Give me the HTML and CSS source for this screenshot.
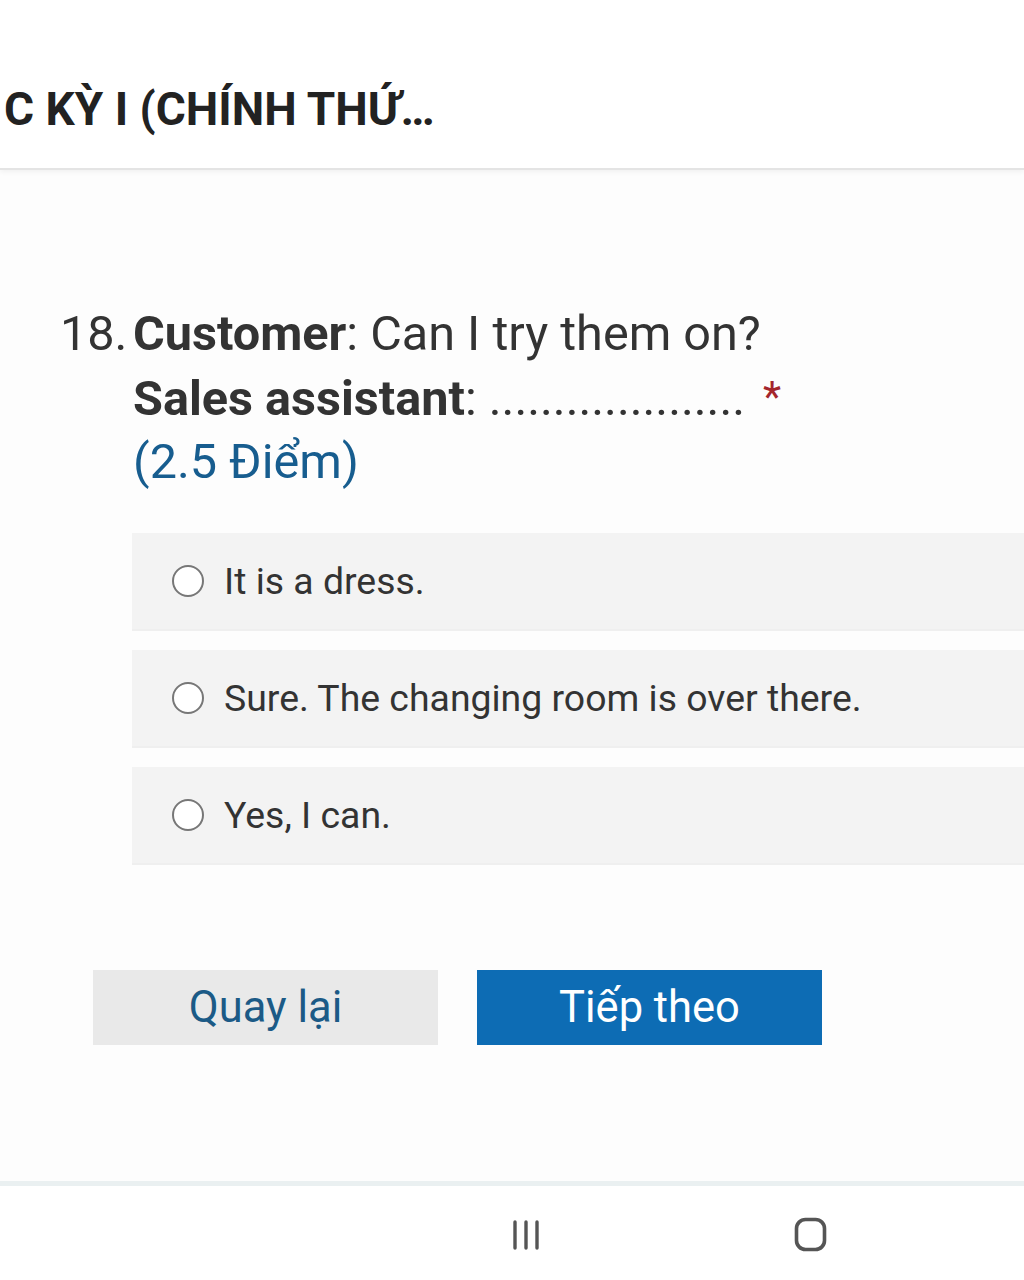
FILE: index.html
```html
<!DOCTYPE html>
<html lang="vi">
<head>
<meta charset="utf-8">
<title>Form</title>
<link rel="stylesheet" href="styles.css">
</head>
<body>
<div class="page">
  <header class="topbar">
    <h1 class="title">C KỲ I (CHÍNH THỨ…</h1>
  </header>
  <main class="content">
    <section class="question">
      <div class="qnum">18.</div>
      <div class="qtext">
        <div class="qline"><b>Customer</b>: Can I try them on?</div>
        <div class="qline"><b>Sales assistant</b>: ....................<span class="req">*</span></div>
        <div class="qline points">(2.5 Điểm)</div>
      </div>
    </section>
    <div class="options">
      <label class="option"><span class="radio"></span><span class="otext">It is a dress.</span></label>
      <label class="option"><span class="radio"></span><span class="otext">Sure. The changing room is over there.</span></label>
      <label class="option"><span class="radio"></span><span class="otext">Yes, I can.</span></label>
    </div>
    <div class="buttons">
      <button class="btn btn-back">Quay lại</button>
      <button class="btn btn-next">Tiếp theo</button>
    </div>
  </main>
  <footer class="navbar">
    <span class="nav-slot">
      <svg width="30" height="32" viewBox="0 0 30 32"><g stroke="#555" stroke-width="3.4" stroke-linecap="round"><line x1="3" y1="3" x2="3" y2="29"/><line x1="14" y1="3" x2="14" y2="29"/><line x1="25" y1="3" x2="25" y2="29"/></g></svg>
    </span>
    <span class="nav-slot">
      <svg width="34" height="36" viewBox="0 0 34 36"><rect x="2.5" y="2.5" width="28" height="30" rx="9" fill="none" stroke="#555" stroke-width="3.6"/></svg>
    </span>
  </footer>
</div>
</body>
</html>
```
FILE: styles.css
```css
html, body {
  margin: 0;
  padding: 0;
}
body {
  width: 1024px;
  height: 1280px;
  overflow: hidden;
  background: #fdfdfd;
  font-family: Roboto, "Noto Sans", "Liberation Sans", sans-serif;
  color: #333;
}
.page {
  display: flex;
  flex-direction: column;
  height: 1280px;
}
.topbar {
  height: 170px;
  background: #fff;
  border-bottom: 2px solid #e4e4e4;
  box-shadow: 0 2px 5px rgba(0,0,0,0.05);
  display: flex;
  align-items: flex-end;
  padding-left: 4px;
  box-sizing: border-box;
}
.title {
  margin: 0 0 32px 0;
  font-size: 46px;
  font-weight: 700;
  color: #222;
  line-height: 54px;
  white-space: nowrap;
}
.content {
  flex: 1;
  padding-top: 132px;
}
.question {
  display: flex;
  padding-left: 60px;
  font-size: 48.6px;
  line-height: 63px;
  color: #333;
}
.qnum {
  width: 73px;
  flex: none;
}
.qline {
  white-space: nowrap;
}
.qline b {
  font-weight: 700;
}
.req {
  color: #a4262c;
  margin-left: 18px;
  font-size: 42px;
  vertical-align: 4px;
}
.points {
  color: #175d8f;
}
.options {
  margin-top: 40px;
  padding-left: 132px;
  display: flex;
  flex-direction: column;
  gap: 21px;
}
.option {
  height: 96px;
  background: #f3f3f3;
  display: flex;
  align-items: center;
  padding-left: 40px;
  box-sizing: border-box;
  box-shadow: 0 2px 0 #efefef;
}
.radio {
  width: 28px;
  height: 28px;
  border: 2px solid #777;
  border-radius: 50%;
  background: #fff;
  flex: none;
}
.otext {
  margin-left: 20px;
  font-size: 37.4px;
  color: #333;
}
.buttons {
  margin-top: 107px;
  padding-left: 93px;
  display: flex;
  gap: 39px;
}
.btn {
  width: 345px;
  height: 75px;
  border: none;
  font-family: Roboto, "Noto Sans", "Liberation Sans", sans-serif;
  font-size: 43.5px;
  padding: 0;
}
.btn-back {
  background: #e9e9e9;
  color: #1b5a86;
}
.btn-next {
  background: #0d6cb4;
  color: #fff;
}
.navbar {
  height: 99px;
  border-top: 5px solid #eaf0f1;
  background: #fff;
  display: flex;
  align-items: center;
  padding-left: 512px;
  gap: 252px;
  box-sizing: border-box;
}
.nav-slot {
  display: flex;
  padding-top: 4px;
}
```
